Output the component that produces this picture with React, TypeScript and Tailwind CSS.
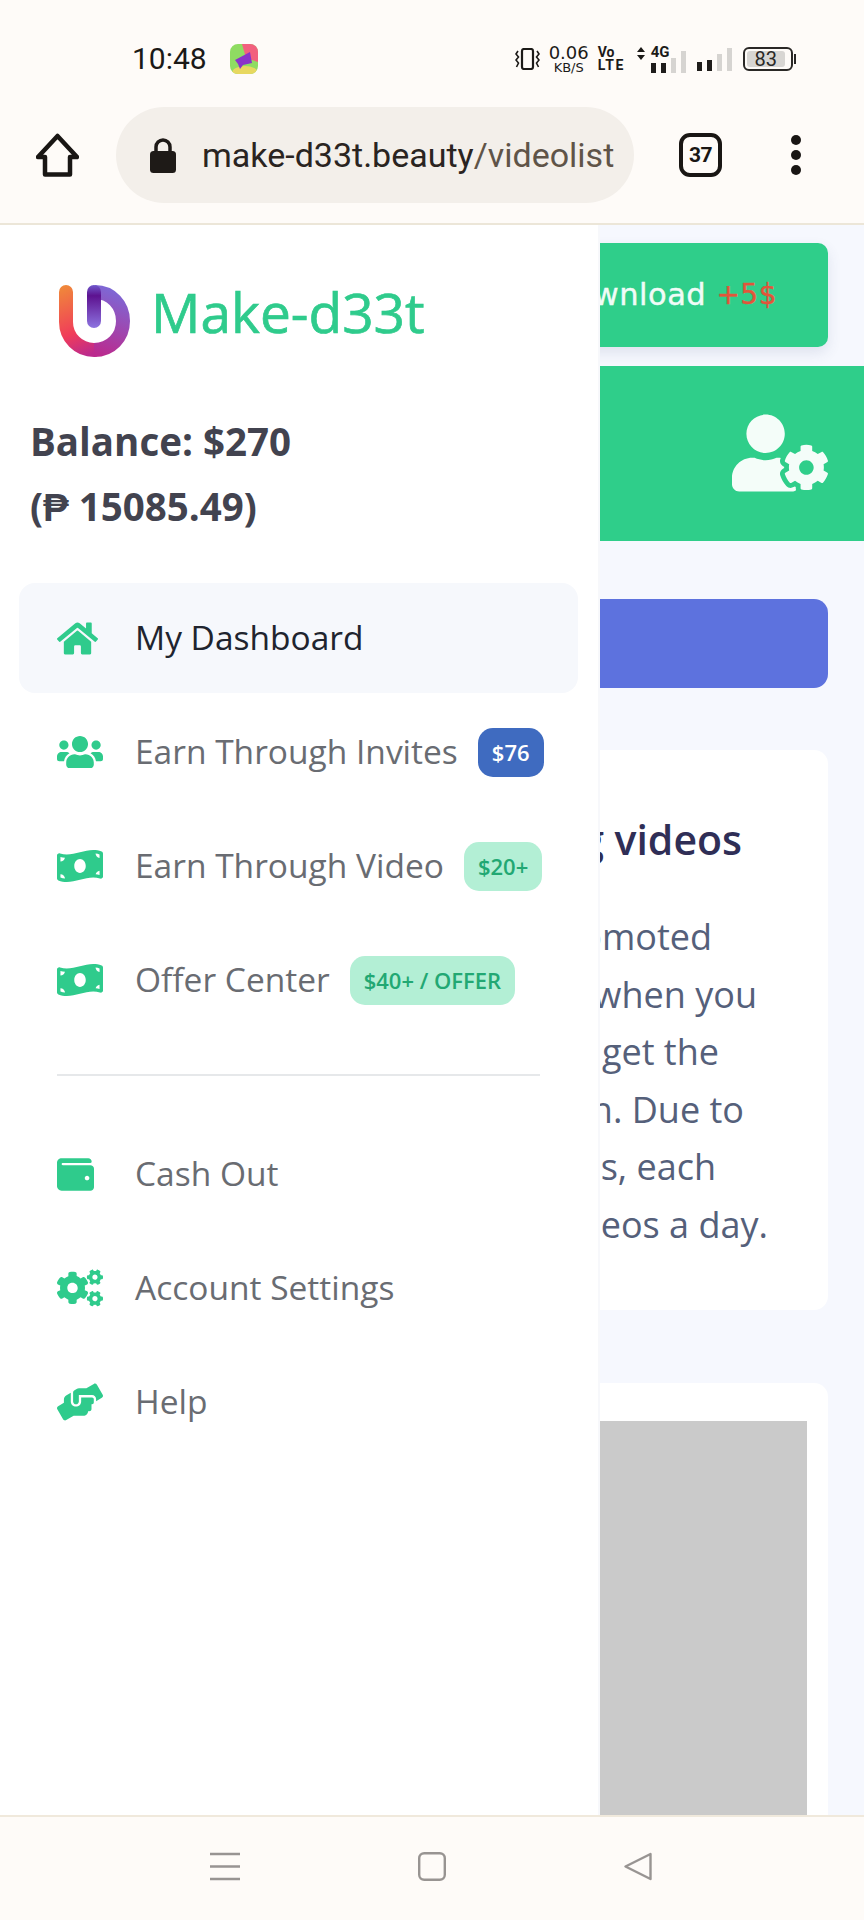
import type { ReactNode } from "react";
import {
  FaCogs,
  FaHandsHelping,
  FaHome,
  FaMoneyBillWave,
  FaUserCog,
  FaUsers,
  FaWallet,
} from "react-icons/fa";

// ─── Status bar ───────────────────────────────────────────────────────────────

function NotificationIcon() {
  return (
    <svg width="28" height="30" viewBox="0 0 28 30" aria-hidden="true">
      <defs>
        <clipPath id="notif">
          <rect width="28" height="30" rx="8" />
        </clipPath>
      </defs>
      <g clipPath="url(#notif)">
        <rect width="28" height="30" fill="#8fdc62" />
        <path d="M12 0H28V18L16 14Z" fill="#f2607e" />
        <ellipse cx="15" cy="29" rx="13" ry="7" fill="#e8d860" />
        <path d="M5 16L20 8L22 19L13 21L10 25L8 20Z" fill="#8a33c9" />
      </g>
    </svg>
  );
}

function VibrateIcon() {
  return (
    <svg width="25" height="22" viewBox="0 0 25 22" fill="none" stroke="#1c1a18" aria-hidden="true">
      <rect x="7" y="1" width="11" height="20" rx="2" strokeWidth="2.2" />
      <path d="M3 3L1 6L3.5 9L1 12L3.5 15L1.5 19" strokeWidth="1.6" />
      <path d="M22 3L24 6L21.5 9L24 12L21.5 15L23.5 19" strokeWidth="1.6" />
    </svg>
  );
}

function SignalBars({ bars }: { bars: { h: string; on: boolean }[] }) {
  return (
    <div className="flex items-end gap-[5px] h-[23px]">
      {bars.map((bar, i) => (
        <div key={i} className={`w-[5px] ${bar.h} ${bar.on ? "bg-[#1f1d1b]" : "bg-[#d6d4d1]"}`} />
      ))}
    </div>
  );
}

function StatusBar() {
  return (
    <div className="flex items-center h-[56px] pt-[2px] pl-[132px]">
      <span className="font-['Roboto'] text-[30px] leading-none text-[#1b1917]">10:48</span>
      <div className="ml-[23px]">
        <NotificationIcon />
      </div>

      <div className="ml-[257px]">
        <VibrateIcon />
      </div>
      <div className="ml-[8px] w-[42px] flex flex-col items-center font-['DejaVu_Sans',sans-serif] text-[#1c1a18]">
        <span className="text-[18px] leading-[15px]">0.06</span>
        <span className="text-[13px] leading-[13px] mt-[1px]">KB/S</span>
      </div>
      <div className="ml-[8px] w-[30px] flex flex-col font-['Roboto'] font-bold text-[#1c1a18]">
        <span className="text-[14px] leading-[13px]">Vo</span>
        <span className="text-[14px] leading-[13px] tracking-[1.5px]">LTE</span>
      </div>
      <div className="ml-[9px] flex items-end w-[60px] h-[27px]">
        <svg className="self-start mt-[1px]" width="14" height="13" viewBox="0 0 14 13" fill="#1c1a18" aria-hidden="true">
          <path d="M4 0L8 5H0ZM4 13L0 8H8Z" />
        </svg>
        <div className="flex flex-col justify-between h-[27px] w-[15px]">
          <span className="font-['Roboto'] font-bold text-[15px] leading-[13px] text-[#1c1a18]">4G</span>
          <div className="flex items-end gap-[5px] h-[10px]">
            <div className="w-[5px] h-[10px] bg-[#1f1d1b]" />
            <div className="w-[5px] h-[10px] bg-[#1f1d1b]" />
          </div>
        </div>
        <div className="ml-[5px] flex items-end gap-[5px]">
          <div className="w-[5px] h-[15px] bg-[#d6d4d1]" />
          <div className="w-[5px] h-[22px] bg-[#d6d4d1]" />
        </div>
      </div>
      <SignalBars
        bars={[
          { h: "h-[9px]", on: true },
          { h: "h-[11px]", on: true },
          { h: "h-[17px]", on: false },
          { h: "h-[23px]", on: false },
        ]}
      />
      <div className="ml-[11px] flex items-center">
        <div className="w-[50px] h-[24px] rounded-[6px] border-2 border-[#2a2826] p-[2px]">
          <div className="w-[38px] h-full rounded-[3px] bg-[#d8d6d3] flex items-center justify-center font-['Roboto'] text-[20px] leading-none text-[#2a2826]">
            83
          </div>
        </div>
        <div className="ml-[1px] w-[2px] h-[10px] bg-[#2a2826]" />
      </div>
    </div>
  );
}

// ─── Browser bar ──────────────────────────────────────────────────────────────

function BrowserBar() {
  return (
    <div className="flex items-center mt-[21px] pl-[36px]">
      <svg width="43" height="44" viewBox="0 0 43 44" fill="none" stroke="#191614" strokeWidth="4.5" strokeLinejoin="round" aria-hidden="true">
        <path d="M21.5 3L41 24H34V41.5H9V24H2Z" />
      </svg>

      <div className="ml-[37px] w-[518px] h-[96px] rounded-[48px] bg-[#f3efea] flex items-center pl-[34px] overflow-hidden">
        <svg width="26" height="35" viewBox="0 0 26 35" aria-hidden="true">
          <path d="M6 14V9A7 7 0 0 1 20 9V14" fill="none" stroke="#1e1a17" strokeWidth="3.5" />
          <rect y="13" width="26" height="22" rx="3.5" fill="#1e1a17" />
        </svg>
        <span className="ml-[26px] font-['Roboto'] text-[34px] leading-none whitespace-nowrap text-[#2a2421]">
          make-d33t.beauty<span className="text-[#5f5448]">/videolist</span>
        </span>
      </div>

      <div className="ml-[45px] w-[43px] h-[44px] rounded-[11px] border-[4.5px] border-[#191614] flex items-center justify-center font-['Roboto'] font-bold text-[21px] tracking-[-0.5px] leading-none text-[#191614]">
        37
      </div>

      <div className="ml-[69px] flex flex-col gap-[5px]">
        <span className="w-[10px] h-[10px] rounded-full bg-[#191614]" />
        <span className="w-[10px] h-[10px] rounded-full bg-[#191614]" />
        <span className="w-[10px] h-[10px] rounded-full bg-[#191614]" />
      </div>
    </div>
  );
}

// ─── Page behind the drawer (cut off by the drawer's edge) ────────────────────

const paragraphLines = [
  { text: "promoted", cls: "mr-[56px]" },
  { text: "when you", cls: "mr-[11px]" },
  { text: "get the", cls: "mr-[49px]" },
  { text: "in. Due to", cls: "mr-[24px]" },
  { text: "ces, each", cls: "mr-[52px]" },
  { text: "videos a day.", cls: "mr-0" },
];

function PageBehind() {
  return (
    <main className="flex-1 min-w-0 overflow-hidden bg-[#f6f8fe] pt-[18px] font-['Open_Sans',sans-serif]">
      <div className="-ml-[20px] mr-[36px] h-[104px] rounded-[10px] bg-[#2fce8a] shadow-[0_6px_14px_rgba(60,70,120,0.12)] flex items-center justify-end pr-[51px] font-['DejaVu_Sans',sans-serif] text-[30.5px] tracking-[0.5px] [-webkit-text-stroke:0.4px] whitespace-nowrap text-[#f0fcf7]">
        wnload&nbsp;<span className="text-[28px] text-[#e2553a]">+5$</span>
      </div>

      <div className="mt-[19px] h-[175px] bg-[#2fce8a] flex items-center justify-end pr-[36px] pb-[1px]">
        <FaUserCog size={96} className="text-[#f4fdf9]" />
      </div>

      <div className="mt-[58px] -ml-[20px] mr-[36px] h-[89px] rounded-[14px] bg-[#5d72de]" />

      <section className="mt-[62px] -ml-[20px] mr-[36px] h-[560px] rounded-[14px] bg-white pt-[63px] overflow-hidden">
        <h2 className="text-right pr-[86px] text-[41px] leading-[52px] font-semibold whitespace-nowrap text-[#2f2e56]">
          g videos
        </h2>
        <div className="mt-[43px] flex flex-col items-end text-[36px] leading-[57.5px] whitespace-nowrap text-[#55607a] pr-[60px]">
          {paragraphLines.map((line) => (
            <p key={line.text} className={line.cls}>
              {line.text}
            </p>
          ))}
        </div>
      </section>

      <section className="mt-[73px] -ml-[20px] mr-[36px] h-[600px] rounded-[14px] bg-white pt-[38px] pr-[21px]">
        <div className="h-full bg-[#cacaca]" />
      </section>
    </main>
  );
}

// ─── Drawer ───────────────────────────────────────────────────────────────────

function Logo() {
  return (
    <svg width="71" height="72" viewBox="0 0 71 72" fill="none" strokeWidth="14" strokeLinecap="round" aria-hidden="true">
      <defs>
        <linearGradient id="logoLeft" gradientUnits="userSpaceOnUse" x1="7" y1="0" x2="35" y2="68">
          <stop offset="0" stopColor="#f0883a" />
          <stop offset="0.65" stopColor="#f03c5a" />
          <stop offset="1" stopColor="#bb2a8e" />
        </linearGradient>
        <linearGradient id="logoRight" gradientUnits="userSpaceOnUse" x1="35" y1="68" x2="60" y2="4">
          <stop offset="0" stopColor="#bb2a8e" />
          <stop offset="1" stopColor="#7b6ad8" />
        </linearGradient>
        <linearGradient id="logoStem" gradientUnits="userSpaceOnUse" x1="35" y1="0" x2="35" y2="43">
          <stop offset="0" stopColor="#7059cc" />
          <stop offset="0.25" stopColor="#5d1290" />
          <stop offset="1" stopColor="#8d74e0" />
        </linearGradient>
      </defs>
      <path d="M7 7V37A28 28 0 0 0 35 65" stroke="url(#logoLeft)" />
      <path d="M35 65C52 65 64 52 64 36C64 20 52 7 36 7" stroke="url(#logoRight)" strokeLinecap="butt" />
      <path d="M35 7V36" stroke="url(#logoStem)" />
    </svg>
  );
}

interface NavItemProps {
  icon: ReactNode;
  label: string;
  active?: boolean;
  badge?: ReactNode;
}

function NavItem({ icon, label, active, badge }: NavItemProps) {
  return (
    <a
      href="#"
      className={`flex items-center h-[110px] pl-[38px] rounded-[16px] ${active ? "bg-[#f6f8fc] text-[#20242e]" : "text-[#696c72]"}`}
    >
      <span className="w-[78px] flex items-center text-[#2fcb8c]">{icon}</span>
      <span className="text-[33.5px] leading-none whitespace-nowrap">{label}</span>
      {badge}
    </a>
  );
}

function Badge({ children, blue }: { children: ReactNode; blue?: boolean }) {
  return (
    <span
      className={`ml-[20px] h-[49px] px-[14px] rounded-[15px] flex items-center text-[22px] font-semibold leading-none whitespace-nowrap ${
        blue ? "bg-[#3f6bc0] text-white" : "bg-[#b3efd5] text-[#22a873]"
      }`}
    >
      {children}
    </span>
  );
}

function Drawer() {
  return (
    <aside className="w-[600px] shrink-0 bg-white border-r-2 border-[#f7f8fb] pt-[60px] font-['Open_Sans',sans-serif]">
      <div className="flex items-start h-[72px] pl-[59px]">
        <Logo />
        <span className="ml-[21px] -mt-[1px] text-[55px] leading-none [-webkit-text-stroke:0.7px] text-[#2fcb8c]">
          Make-d33t
        </span>
      </div>

      <div className="mt-[52px] pl-[30px] text-[38.5px] leading-[65px] font-bold text-[#42434f]">
        <div>Balance: $270</div>
        <div>(₱ 15085.49)</div>
      </div>

      <nav className="mt-[44px] mx-[19px] w-[559px] flex flex-col gap-[4px]">
        <NavItem active icon={<FaHome size={41} />} label="My Dashboard" />
        <NavItem
          icon={<FaUsers size={46} />}
          label="Earn Through Invites"
          badge={<Badge blue>$76</Badge>}
        />
        <NavItem
          icon={<FaMoneyBillWave size={46} />}
          label="Earn Through Video"
          badge={<Badge>$20+</Badge>}
        />
        <NavItem
          icon={<FaMoneyBillWave size={46} />}
          label="Offer Center"
          badge={<Badge>$40+ / OFFER</Badge>}
        />

        <div className="mt-[35px] mb-[39px] ml-[38px] w-[483px] h-[2px] bg-[#e6e8ea]" />

        <NavItem icon={<FaWallet size={37} />} label="Cash Out" />
        <NavItem icon={<FaCogs size={46} />} label="Account Settings" />
        <NavItem icon={<FaHandsHelping size={46} />} label="Help" />
      </nav>
    </aside>
  );
}

// ─── Android nav bar ──────────────────────────────────────────────────────────

function SystemNav() {
  return (
    <div className="h-[105px] shrink-0 bg-[#fefbf8] border-t-2 border-[#f0e9dc] flex items-center pl-[210px] pb-[4px]">
      <svg width="30" height="29" viewBox="0 0 30 29" stroke="#989492" strokeWidth="2.6" aria-hidden="true">
        <path d="M0 2H30M0 14.5H30M0 27H30" />
      </svg>
      <svg className="ml-[178px]" width="28" height="29" viewBox="0 0 28 29" fill="none" stroke="#989492" strokeWidth="2.4" aria-hidden="true">
        <rect x="1.2" y="1.2" width="25.6" height="26.6" rx="5" />
      </svg>
      <svg className="ml-[178px]" width="28" height="29" viewBox="0 0 28 29" fill="none" stroke="#989492" strokeWidth="2.4" strokeLinejoin="round" aria-hidden="true">
        <path d="M26.5 2V27L1.5 14.5Z" />
      </svg>
    </div>
  );
}

export default function App() {
  return (
    <div className="w-[864px] h-[1920px] flex flex-col overflow-hidden bg-[#fefbf8]">
      <header className="h-[225px] shrink-0 pt-[30px] bg-[#fefbf8] border-b-2 border-[#ece6d8]">
        <StatusBar />
        <BrowserBar />
      </header>
      <div className="flex flex-1 min-h-0 overflow-hidden">
        <Drawer />
        <PageBehind />
      </div>
      <SystemNav />
    </div>
  );
}
